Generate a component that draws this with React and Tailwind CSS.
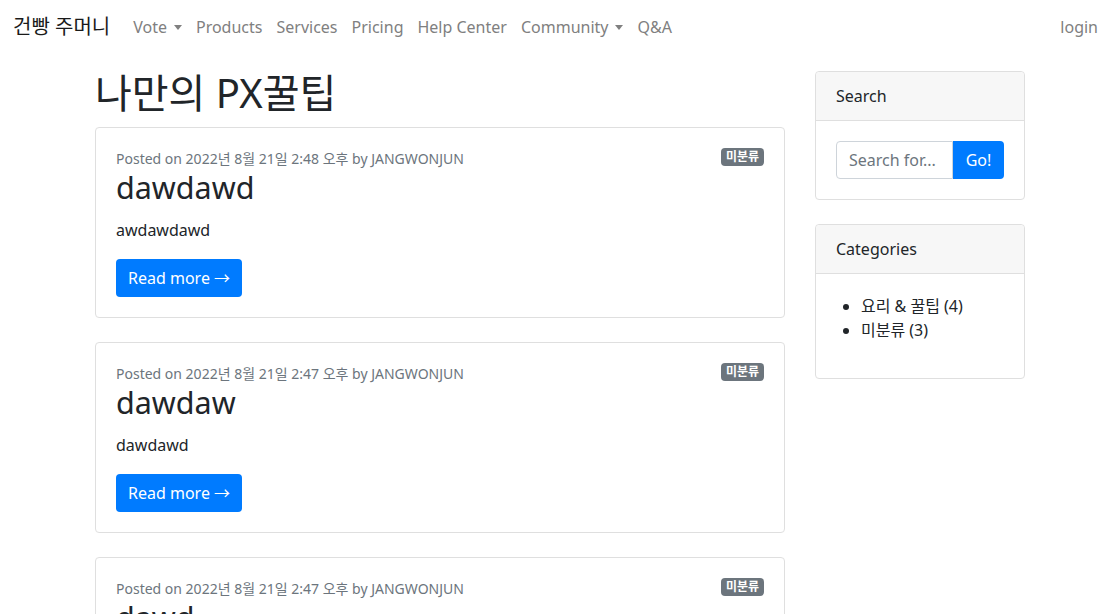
import React from "react";

const posts = [
  { date: "2022년 8월 21일 2:48 오후", title: "dawdawd", body: "awdawdawd" },
  { date: "2022년 8월 21일 2:47 오후", title: "dawdaw", body: "dawdawd" },
  { date: "2022년 8월 21일 2:47 오후", title: "dawd", body: "dawdawd" },
];

function Caret() {
  return (
    <span className="inline-block ml-[7px] align-[3px] w-0 h-0 border-t-[5px] border-t-[#808080] border-x-[4.5px] border-x-transparent" />
  );
}

function NavLink({ children, caret }) {
  return (
    <a className="px-[7px] text-[16px] text-[#808080] leading-6 whitespace-nowrap">
      {children}
      {caret && <Caret />}
    </a>
  );
}

function PostCard({ p }) {
  return (
    <div className="border border-[#dfdfdf] rounded-[4px] mb-6 px-5 pt-5 pb-5">
      <div className="flex justify-between items-center">
        <div className="text-[14px] leading-[21px] text-[#6c757d]">
          Posted on {p.date} by JANGWONJUN
        </div>
        <span className="bg-[#6c757d] text-white text-[12px] font-bold leading-[12px] px-[5px] py-[3px] rounded-[4px] mt-[-3px]">
          미분류
        </span>
      </div>
      <h2 className="text-[30.5px] leading-[36px] text-[#212529] mb-[13px]">{p.title}</h2>
      <p className="text-[16px] leading-6 text-[#212529] mb-[17px]">{p.body}</p>
      <a className="inline-block bg-[#007bff] text-white text-[16px] leading-6 px-3 py-[7px] rounded-[4px]">
        Read more →
      </a>
    </div>
  );
}

export default function App() {
  return (
    <div className="min-h-screen bg-white text-[#212529] font-['Noto_Sans','Noto_Sans_CJK_KR',sans-serif]">
      <nav className="h-[54px] flex items-center pl-[13px] pr-[6px]">
        <a className="text-[20px] leading-[30px] text-[#1a1a1a] mr-[16px] whitespace-nowrap">건빵 주머니</a>
        <div className="flex items-center">
          <NavLink caret>Vote</NavLink>
          <NavLink>Products</NavLink>
          <NavLink>Services</NavLink>
          <NavLink>Pricing</NavLink>
          <NavLink>Help Center</NavLink>
          <NavLink caret>Community</NavLink>
          <NavLink>Q&amp;A</NavLink>
        </div>
        <a className="ml-auto text-[16px] text-[#808080] leading-6 whitespace-nowrap">login</a>
      </nav>
      <main className="pt-[17px] pl-[95px] flex gap-[30px]">
        <div className="w-[690px] shrink-0">
          <h1 className="text-[40px] leading-[44px] text-[#212529] mb-3">나만의 PX꿀팁</h1>
          {posts.map((p, i) => (
            <PostCard key={i} p={p} />
          ))}
        </div>
        <div className="w-[210px] shrink-0">
          <div className="border border-[#dfdfdf] rounded-[4px] mb-6">
            <div className="bg-[#f7f7f7] border-b border-[#dfdfdf] px-5 py-3 text-[16px] leading-6 rounded-t-[4px]">
              Search
            </div>
            <div className="p-5 flex">
              <input
                className="w-[117px] h-[38px] border border-[#ced4da] rounded-l-[4px] px-3 text-[16px] placeholder:text-[#6c757d] outline-none"
                placeholder="Search for..."
              />
              <button className="w-[51px] h-[38px] bg-[#007bff] text-white text-[16px] rounded-r-[4px]">Go!</button>
            </div>
          </div>
          <div className="border border-[#dfdfdf] rounded-[4px]">
            <div className="bg-[#f7f7f7] border-b border-[#dfdfdf] px-5 py-3 text-[16px] leading-6 rounded-t-[4px]">
              Categories
            </div>
            <div className="p-5">
              <ul className="list-disc pl-[25px] mb-4 text-[16px] leading-6 text-[#212529]">
                <li>요리 &amp; 꿀팁 (4)</li>
                <li>미분류 (3)</li>
              </ul>
            </div>
          </div>
        </div>
      </main>
    </div>
  );
}
